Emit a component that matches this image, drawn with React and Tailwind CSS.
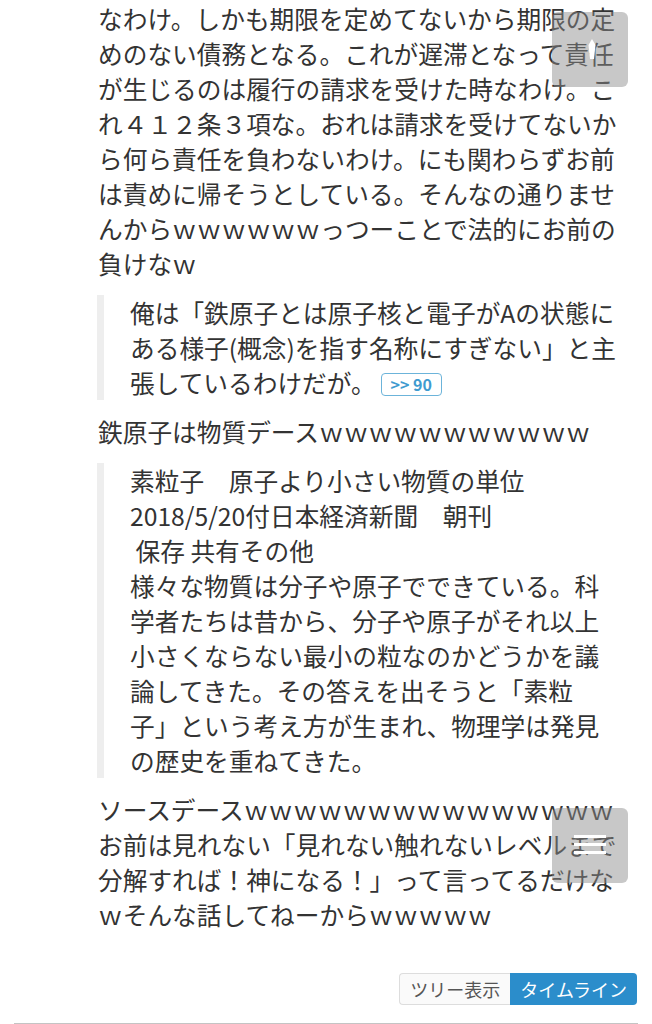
import React from 'react';

const FONT = { fontFamily: '"Noto Sans CJK JP", "Noto Sans", sans-serif' };

function Quote({ children }) {
  return (
    <blockquote className="my-[14px] -ml-[1px] border-l-[7px] border-[#eeeeee] pl-[26px]">
      {children}
    </blockquote>
  );
}

function FloatButton({ top, children }) {
  return (
    <div
      className={`absolute left-[552px] w-[76px] h-[75px] rounded-[6px] bg-[rgba(140,140,140,0.48)] flex items-center justify-center ${top}`}
    >
      {children}
    </div>
  );
}

export default function App() {
  return (
    <div className="relative min-h-[1024px] bg-white text-[#333] overflow-hidden" style={FONT}>
      <div className="pl-[98px] w-[622px] pt-[1px] text-[24.7px] leading-[35px] [text-spacing-trim:space-all]">
        <p>
          なわけ。しかも期限を定めてないから期限の定めのない債務となる。これが遅滞となって責任が生じるのは履行の請求を受けた時なわけ。これ４１２条３項な。おれは請求を受けてないから何ら責任を負わないわけ。にも関わらずお前は責めに帰そうとしている。そんなの通りませんからｗｗｗｗｗｗっつーことで法的にお前の負けなｗ
        </p>

        <Quote>
          俺は「鉄原子とは原子核と電子がAの状態にある様子(概念)を指す名称にすぎない」と主張しているわけだが。
          <span className="ml-[5px] inline-flex items-center justify-center align-middle -mt-[4px] w-[61px] h-[23px] rounded-[4px] border-[1.5px] border-[#6cb4da] text-[#3f9bd0] text-[16px] leading-none font-bold">
            &gt;&gt; 90
          </span>
        </Quote>

        <p>鉄原子は物質デースｗｗｗｗｗｗｗｗｗｗｗ</p>

        <Quote>
          素粒子　原子より小さい物質の単位
          <br />
          2018/5/20付日本経済新聞　朝刊
          <br />
          {'\u00a0'}保存 共有その他
          <br />
          様々な物質は分子や原子でできている。科学者たちは昔から、分子や原子がそれ以上小さくならない最小の粒なのかどうかを議論してきた。その答えを出そうと「素粒子」という考え方が生まれ、物理学は発見の歴史を重ねてきた。
        </Quote>

        <p>
          ソースデースｗｗｗｗｗｗｗｗｗｗｗｗｗｗｗお前は見れない「見れない触れないレベルまで分解すれば！神になる！」って言ってるだけなｗそんな話してねーからｗｗｗｗｗ
        </p>
      </div>

      <div className="mt-[41px] flex justify-end pr-[15px]">
        <div className="flex h-[32px] text-[18px] leading-none">
          <button className="px-[10px] rounded-l-[4px] border border-r-0 border-[#dddddd] bg-[#fafafa] text-[#555]">
            ツリー表示
          </button>
          <button className="px-[10px] rounded-r-[4px] bg-[#2b8dcb] text-white">
            タイムライン
          </button>
        </div>
      </div>

      <div className="mt-[18px] mx-[14px] h-[2px] bg-[#c4c4c4]" />

      <FloatButton top="top-[12px]">
        <svg width="10" height="24" viewBox="0 0 10 24" className="ml-[4px] -mt-[2px]">
          <path d="M5 2 L8.5 8 L7 22 L3 22 L1.5 8 Z" fill="white" />
        </svg>
      </FloatButton>

      <FloatButton top="top-[808px]">
        <div className="flex flex-col gap-[5px] -mt-[2px]">
          <span className="block w-[32px] h-[3px] bg-white" />
          <span className="block w-[32px] h-[3px] bg-white" />
          <span className="block w-[32px] h-[3px] bg-white" />
        </div>
      </FloatButton>
    </div>
  );
}
